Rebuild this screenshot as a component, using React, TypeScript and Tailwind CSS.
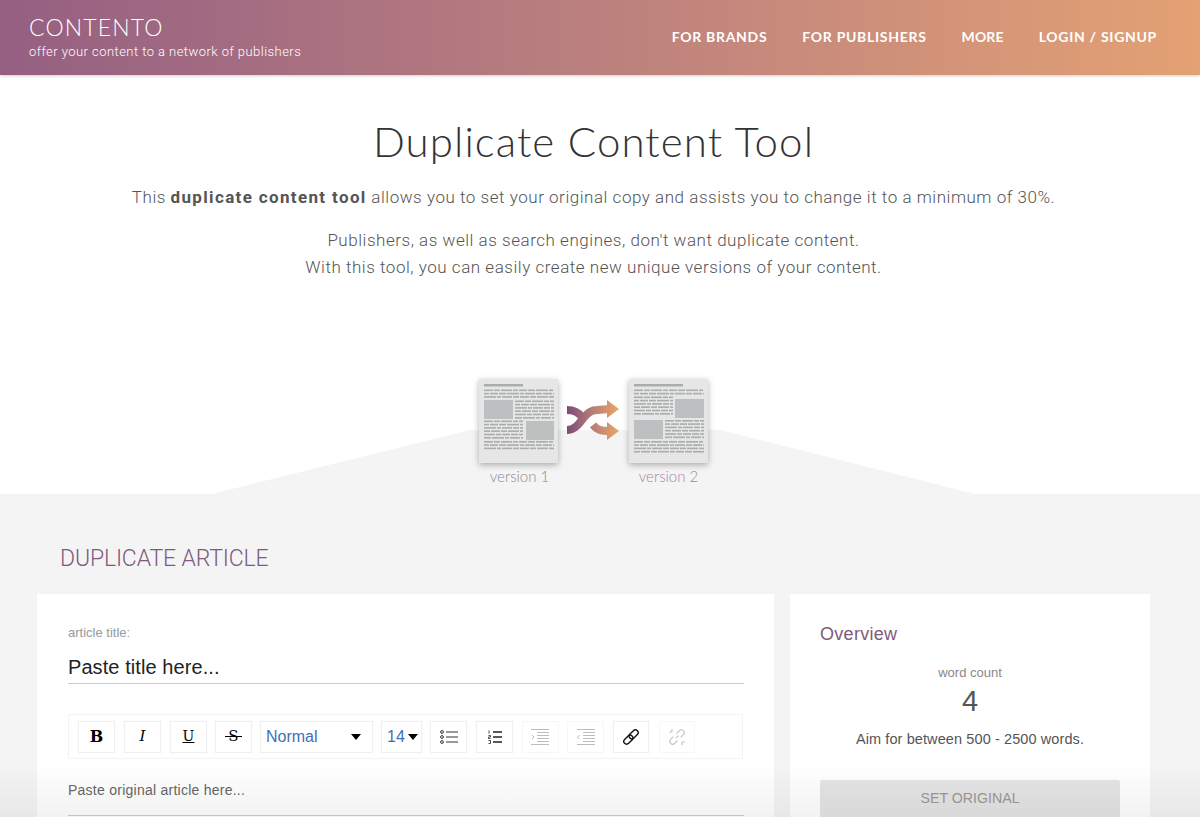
const NAV = ["FOR BRANDS", "FOR PUBLISHERS", "MORE", "LOGIN / SIGNUP"];

// word widths repeated along each fake text line of the article thumbnails
const WORDS = [9, 6, 11, 5, 8, 7, 12, 4, 10, 6];

function TextLines({ x, y, w, rows }: { x: number; y: number; w: number; rows: number }) {
  const dashes = [];
  for (let r = 0; r < rows; r++) {
    let cx = x;
    let i = r * 3;
    while (cx < x + w) {
      const dw = Math.min(WORDS[i % WORDS.length], x + w - cx);
      dashes.push(<rect key={`${r}-${i}`} x={cx} y={y + r * 3.3} width={dw} height={1.6} fill="#a9adad" />);
      cx += dw + 1;
      i++;
    }
  }
  return <>{dashes}</>;
}

function Doc({ variant }: { variant: 1 | 2 }) {
  return (
    <svg width="79" height="84" viewBox="0 0 79 84" className="drop-shadow-[0_2px_3px_rgba(0,0,0,0.3)]">
      <rect width="79" height="84" fill="#e6e6e6" />
      {variant === 1 ? (
        <>
          <rect x="5" y="5" width="39" height="2.5" fill="#a9adad" />
          <TextLines x={5} y={10.5} w={70} rows={3} />
          <rect x="5" y="21" width="29" height="19" fill="#bcc0c0" />
          <TextLines x={36} y={21.5} w={39} rows={6} />
          <TextLines x={5} y={41.5} w={39} rows={6} />
          <rect x="47" y="42" width="28" height="19" fill="#bcc0c0" />
          <TextLines x={5} y={62} w={70} rows={3} />
        </>
      ) : (
        <>
          <rect x="5" y="5" width="49" height="2.5" fill="#a9adad" />
          <TextLines x={5} y={10.5} w={70} rows={2} />
          <TextLines x={5} y={17.5} w={39} rows={6} />
          <rect x="46" y="20" width="29" height="19" fill="#bcc0c0" />
          <rect x="5" y="41" width="29" height="19" fill="#bcc0c0" />
          <TextLines x={36} y={41} w={39} rows={6} />
          <TextLines x={5} y={62} w={70} rows={4} />
        </>
      )}
    </svg>
  );
}

function ShuffleArrows() {
  return (
    <svg width="52" height="40" viewBox="0 0 52 40" fill="none">
      <defs>
        <linearGradient id="shuffle" gradientUnits="userSpaceOnUse" x1="0" y1="0" x2="52" y2="0">
          <stop offset="0" stopColor="#7d4c78" />
          <stop offset="0.5" stopColor="#b77f76" />
          <stop offset="1" stopColor="#eba667" />
        </linearGradient>
      </defs>
      <g stroke="url(#shuffle)" strokeWidth="8">
        <path d="M0 10 C8 10 12 13 15 17" />
        <path d="M26 25 C30 30 34 31 43 31" />
        <path d="M0 30 C14 30 16 10 30 10 L43 9" />
      </g>
      <path d="M40 0 L52 9 L40 18 Z M40 22 L52 31 L40 40 Z" fill="url(#shuffle)" />
    </svg>
  );
}

function ToolButton({ className = "", children }: { className?: string; children: React.ReactNode }) {
  return (
    <div className={`flex h-[32px] items-center border border-[#f0f0f0] bg-white shadow-[0_0_1px_rgba(0,0,0,0.08)] ${className}`}>
      {children}
    </div>
  );
}

function Caret() {
  return <span className="border-x-[5px] border-t-[6px] border-x-transparent border-t-black" />;
}

function BulletIcon() {
  return (
    <svg width="18" height="14" viewBox="0 0 18 14" fill="none" stroke="#333">
      <circle cx="2" cy="2" r="1.4" />
      <circle cx="2" cy="7" r="1.4" />
      <circle cx="2" cy="12" r="1.4" />
      <path d="M6 2h12M6 7h12M6 12h12" />
    </svg>
  );
}

function NumberedIcon() {
  return (
    <svg width="14" height="14" viewBox="0 0 14 14" fill="none" stroke="#222">
      <path d="M1 0.5v3M0.5 5.5h2v1.5h-2v1.5h2M0.5 10.5h2v3h-2" strokeWidth="0.8" />
      <path d="M5 2h9M5 7h9M5 12h9" strokeWidth="1.6" />
    </svg>
  );
}

function IndentIcon({ flip }: { flip?: boolean }) {
  return (
    <svg width="19" height="16" viewBox="0 0 19 16" fill="none" stroke="#bdbdbd">
      <path d={flip ? "M1 .5h18M1 15.5h18M7 3.5h12M7 6.5h12M7 9.5h12M7 12.5h12" : "M0 .5h18M0 15.5h18M6 3.5h12M6 6.5h12M6 9.5h12M6 12.5h12"} />
      <path d={flip ? "M3.5 6L1.5 8l2 2" : "M1 6l2 2-2 2"} />
    </svg>
  );
}

function ChainIcon() {
  return (
    <svg width="18" height="18" viewBox="0 0 18 18" fill="none" stroke="#111" strokeWidth="1.4">
      <g transform="rotate(-45 9 9)">
        <rect x="0" y="6.2" width="10.5" height="5.6" rx="2.8" />
        <rect x="7.5" y="6.2" width="10.5" height="5.6" rx="2.8" />
      </g>
    </svg>
  );
}

function BrokenChainIcon() {
  return (
    <svg width="18" height="18" viewBox="0 0 18 18" fill="none" stroke="#c4c4c4" strokeWidth="1.2">
      <g transform="rotate(-45 9 9)">
        <path d="M6.5 6.2H2.8a2.8 2.8 0 0 0 0 5.6h4" />
        <path d="M11.5 11.8h3.7a2.8 2.8 0 0 0 0-5.6h-4" />
        <path d="M7 9h4" />
      </g>
      <path d="M4 1v3M1 4h3M14 14h3M14 14v3" />
    </svg>
  );
}

export default function App() {
  return (
    <div className="relative h-[817px] overflow-hidden bg-white font-['Liberation_Sans',sans-serif]">
      <header className="relative z-10 flex h-[75px] items-center justify-between bg-gradient-to-r from-[#955f82] to-[#e4a173] pl-[29px] pr-[43px] text-white shadow-[0_1px_3px_rgba(0,0,0,0.2)]">
        <div className="mt-[-2px]">
          <div className="font-['Lato',sans-serif] text-[23px] font-light leading-[26px] tracking-[0.05em]">CONTENTO</div>
          <div className="mt-[4px] font-['Roboto',sans-serif] text-[13px] font-light leading-[16px] tracking-[0.45px]">
            offer your content to a network of publishers
          </div>
        </div>
        <nav className="mt-[-3px] flex gap-[35px] font-['Lato',sans-serif] text-[14px] font-bold tracking-[0.05em]">
          {NAV.map((n) => (
            <span key={n} className={n === "MORE" ? "tracking-[0.01em]" : ""}>{n}</span>
          ))}
        </nav>
      </header>

      <section className="relative h-[419px] text-center font-['Roboto',sans-serif] font-light text-[#555]">
        <svg className="absolute bottom-0 left-0" width="1200" height="64" viewBox="0 0 1200 64">
          <path d="M212 64 L470 0 H720 L975 64 Z" fill="#f4f4f4" />
        </svg>
        <div className="relative pr-[13px]">
          <h1 className="pt-[41px] font-['Lato',sans-serif] text-[42px] font-light leading-[50px] tracking-[0.026em] text-[#333]">
            Duplicate Content Tool
          </h1>
          <p className="mt-[19px] text-[17px] leading-[24px] tracking-[0.53px]">
            This <strong className="font-bold tracking-[1.35px]">duplicate content tool</strong> allows you to set your original copy and assists you to change it to a minimum of 30%.
          </p>
          <p className="mt-[18px] text-[17px] leading-[27px] tracking-[0.53px]">
            Publishers, as well as search engines, don't want duplicate content.
            <br />
            With this tool, you can easily create new unique versions of your content.
          </p>
          <div className="mt-[98px] flex justify-center">
            <div className="flex w-[79px] flex-col items-center">
              <Doc variant={1} />
              <span className="mt-[3px] whitespace-nowrap pl-[2px] font-['Lato',sans-serif] text-[15px] font-light leading-[20px] text-[#8f8a8f]">version 1</span>
            </div>
            <div className="ml-[9px] mr-[10px] mt-[21px]">
              <ShuffleArrows />
            </div>
            <div className="flex w-[79px] flex-col items-center">
              <Doc variant={2} />
              <span className="mt-[3px] whitespace-nowrap font-['Lato',sans-serif] text-[15px] font-light leading-[20px] text-[#a583a3]">version 2</span>
            </div>
          </div>
        </div>
      </section>

      <section className="h-[323px] bg-[#f4f4f4] pl-[37px] pr-[50px]">
        <h2 className="pl-[23px] pt-[51px] font-['Roboto',sans-serif] text-[23px] font-light leading-[28px] tracking-[-0.15px] text-[#7e5a7c]">
          DUPLICATE ARTICLE
        </h2>
        <div className="mt-[21px] flex gap-[16px]">
          <div className="h-[300px] w-[737px] bg-white pl-[31px] pr-[30px] pt-[32px]">
            <div className="text-[13px] leading-[14px] text-[#999]">article title:</div>
            <div className="mt-[14px] border-b border-[#ccc] pb-[2px] text-[20px] leading-[27px] tracking-[0.08px] text-[#222]">Paste title here...</div>
            <div className="mt-[30px] flex h-[45px] w-[675px] items-center gap-[8px] border border-[#f3f3f3] pl-[9px] text-black">
              <ToolButton className="w-[37px] justify-center font-['DejaVu_Serif',serif] text-[16px] font-bold">B</ToolButton>
              <ToolButton className="ml-px w-[37px] justify-center font-['DejaVu_Serif',serif] text-[15px] italic">I</ToolButton>
              <ToolButton className="ml-px w-[37px] justify-center font-['DejaVu_Serif',serif] text-[14px] underline">U</ToolButton>
              <ToolButton className="w-[37px] justify-center font-['DejaVu_Serif',serif] text-[15px]">
                <span className="relative px-[3px]">
                  S
                  <span className="absolute inset-x-0 top-[11px] h-px bg-black" />
                </span>
              </ToolButton>
              <ToolButton className="w-[113px] justify-between pl-[5px] pr-[11px] text-[16px] text-[#3f6fb8]">
                Normal
                <Caret />
              </ToolButton>
              <ToolButton className="w-[41px] justify-between pl-[5px] pr-[3px] text-[16px] text-[#3f6fb8]">
                14
                <Caret />
              </ToolButton>
              <ToolButton className="w-[37px] justify-center"><BulletIcon /></ToolButton>
              <ToolButton className="ml-px w-[37px] justify-center"><NumberedIcon /></ToolButton>
              <ToolButton className="ml-px w-[37px] justify-center border-[#f7f7f7] shadow-none"><IndentIcon /></ToolButton>
              <ToolButton className="w-[37px] justify-center border-[#f7f7f7] shadow-none"><IndentIcon flip /></ToolButton>
              <ToolButton className="ml-px w-[36px] justify-center"><ChainIcon /></ToolButton>
              <ToolButton className="ml-[2px] w-[36px] justify-center border-[#f7f7f7] shadow-none"><BrokenChainIcon /></ToolButton>
            </div>
            <div className="mt-[23px] border-b border-[#ccc] pb-[16px] text-[14px] leading-[17px] tracking-[0.25px] text-[#666]">Paste original article here...</div>
          </div>
          <div className="h-[300px] w-[360px] bg-white px-[30px] pt-[28px]">
            <h3 className="text-[18px] font-normal leading-[24px] tracking-[0.3px] text-[#7e5a7c]">Overview</h3>
            <div className="mt-[20px] text-center">
              <div className="text-[13px] leading-[14px] text-[#888]">word count</div>
              <div className="mt-[2px] text-[29px] leading-[38px] text-[#555]">4</div>
              <div className="mt-[10px] text-[14.5px] leading-[18px] tracking-[0.1px] text-[#555]">Aim for between 500 - 2500 words.</div>
            </div>
            <button className="mt-[32px] h-[38px] w-full rounded-[2px] bg-[#e4e4e4] text-[14.2px] text-[#999]">SET ORIGINAL</button>
          </div>
        </div>
      </section>

      <div className="pointer-events-none absolute inset-x-0 bottom-0 h-[55px] bg-gradient-to-t from-black/[0.05] to-transparent" />
    </div>
  );
}
